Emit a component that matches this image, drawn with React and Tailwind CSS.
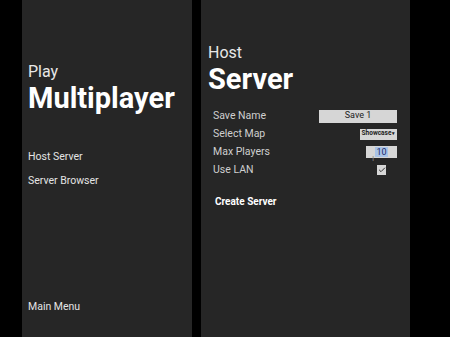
import { Check } from "lucide-react";

const font = { fontFamily: "Roboto, 'Liberation Sans', sans-serif" };

function Row({ label, children }) {
  return (
    <div className="flex h-[18px] items-center justify-between">
      <span className="text-[10.5px] text-[#cfcfcf]">{label}</span>
      {children}
    </div>
  );
}

export default function App() {
  return (
    <div className="flex h-[337px] w-[450px] overflow-hidden bg-black" style={font}>
      <div className="ml-[22px] flex w-[170px] flex-col bg-[#262626] pl-[6px]">
        <div className="mt-[62px] text-[16px] leading-[20px] text-[#e8e8e8]">Play</div>
        <div className="text-[29px] font-bold leading-[32px] text-white">Multiplayer</div>
        <div className="mt-[31px] text-[10.5px] leading-[24px] text-[#e4e4e4]">Host Server</div>
        <div className="text-[10.5px] leading-[24px] text-[#e4e4e4]">Server Browser</div>
        <div className="mt-auto mb-[22px] text-[10.5px] leading-[16px] text-[#e4e4e4]">Main Menu</div>
      </div>
      <div className="ml-[9px] flex w-[209px] flex-col bg-[#262626] pl-[7px]">
        <div className="mt-[43px] text-[16px] leading-[20px] text-[#e8e8e8]">Host</div>
        <div className="text-[29px] font-bold leading-[32px] text-white">Server</div>
        <div className="mt-[12px] flex flex-col pl-[5px] pr-[13px]">
          <Row label="Save Name">
            <div className="flex h-[13px] w-[78px] items-center justify-center bg-[#d6d6d6] text-[9px] text-[#222]">
              Save 1
            </div>
          </Row>
          <Row label="Select Map">
            <div className="flex h-[11px] w-[37px] items-center justify-center bg-[#d6d6d6] text-[6.5px] font-bold text-[#222]">
              Showcase<span className="ml-[1px] text-[5px]">▾</span>
            </div>
          </Row>
          <Row label="Max Players">
            <div className="relative flex h-[12px] w-[31px] items-center justify-center bg-[#d6d6d6] text-[9px] text-[#1a2a6a]">
              <span className="bg-[#a9c3e6] px-[1px] leading-[10px]">10</span>
              <span className="absolute left-[6px] top-[9px] text-[8px] leading-[8px] text-[#888]">I</span>
            </div>
          </Row>
          <Row label="Use LAN">
            <div className="mr-[11px] flex h-[10px] w-[9px] items-center justify-center bg-[#d6d6d6]">
              <Check size={8} strokeWidth={3} className="text-[#333]" />
            </div>
          </Row>
        </div>
        <div className="mt-[15px] pl-[7px] text-[10px] font-bold leading-[16px] text-white">Create Server</div>
      </div>
    </div>
  );
}
